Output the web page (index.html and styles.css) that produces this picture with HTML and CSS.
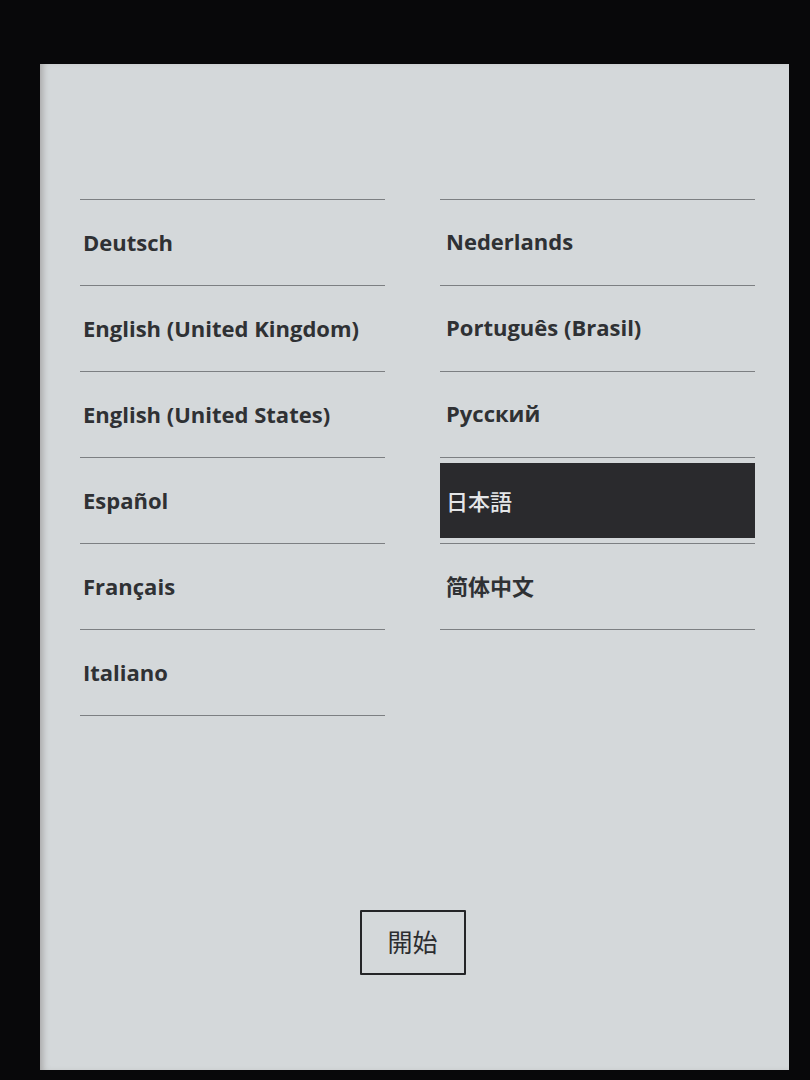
FILE: index.html
```html
<!DOCTYPE html>
<html lang="ja">
<head>
<meta charset="utf-8">
<title>言語選択</title>
<link rel="stylesheet" href="styles.css">
</head>
<body>
<div class="screen">
  <div class="columns">
    <ul class="list list-left">
      <li class="item"><span class="label">Deutsch</span></li>
      <li class="item"><span class="label">English (United Kingdom)</span></li>
      <li class="item"><span class="label">English (United States)</span></li>
      <li class="item"><span class="label">Español</span></li>
      <li class="item"><span class="label">Français</span></li>
      <li class="item"><span class="label">Italiano</span></li>
    </ul>
    <ul class="list list-right">
      <li class="item"><span class="label">Nederlands</span></li>
      <li class="item"><span class="label">Português (Brasil)</span></li>
      <li class="item"><span class="label">Русский</span></li>
      <li class="item selected"><span class="label cjk-jp">日本語</span></li>
      <li class="item"><span class="label cjk-sc">简体中文</span></li>
    </ul>
  </div>
  <button class="start">開始</button>
</div>
</body>
</html>
```
FILE: styles.css
```css
html, body {
  margin: 0;
  padding: 0;
}

body {
  width: 810px;
  height: 1080px;
  background: #08080a;
  overflow: hidden;
  font-family: "Open Sans", "Noto Sans", "Noto Sans CJK JP", sans-serif;
}

.screen {
  margin-left: 40px;
  margin-top: 64px;
  width: 749px;
  height: 1006px;
  background: #d4d8da;
  box-shadow: inset 6px 0 6px -3px #a9a9a9;
  display: flex;
  flex-direction: column;
  box-sizing: border-box;
  padding-top: 135px;
}

.columns {
  display: grid;
  grid-template-columns: 305px 315px;
  column-gap: 55px;
  padding-left: 40px;
  align-items: start;
}

.list {
  list-style: none;
  margin: 0;
  padding: 0;
  border-top: 1px solid #7c7f82;
}

.item {
  height: 85px;
  border-bottom: 1px solid #7c7f82;
  display: flex;
  align-items: stretch;
}

.label {
  display: flex;
  align-items: center;
  flex: 1;
  font-size: 22px;
  font-weight: 700;
  color: #2f3134;
}

.list-left .label {
  padding-left: 3px;
  padding-bottom: 2px;
}

.list-right .label {
  padding-left: 6px;
  padding-bottom: 4px;
}

.item.selected {
  padding: 5px 0 5px;
  height: 75px;
}

.item.selected .label {
  background: #2a2a2d;
  color: #e4e6e8;
  font-weight: 500;
  padding-bottom: 2px;
}

.cjk-jp {
  font-family: "Noto Sans CJK JP", sans-serif;
}

.cjk-sc {
  font-family: "Noto Sans CJK SC", sans-serif;
}

.start {
  align-self: center;
  margin-top: 194px;
  margin-right: 4px;
  width: 106px;
  height: 65px;
  background: transparent;
  border: 2px solid #242527;
  border-radius: 1px;
  font-family: "Noto Sans CJK JP", sans-serif;
  font-size: 25px;
  font-weight: 400;
  color: #2c2d30;
  padding: 0 0 4px;
}
```
